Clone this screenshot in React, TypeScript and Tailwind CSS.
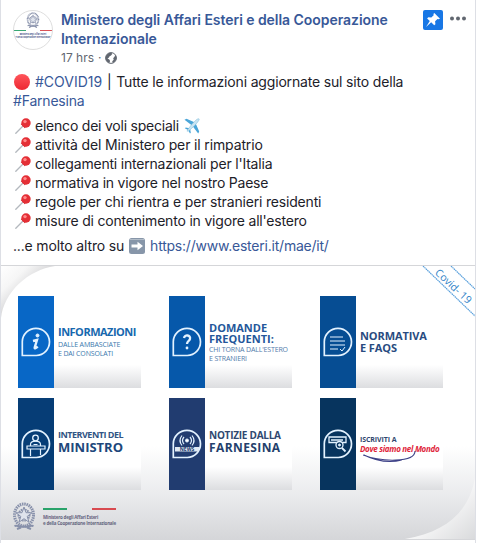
import type { ReactNode } from 'react';

const Pin = () => (
  <svg className="mr-1 h-4 w-4 shrink-0" viewBox="0 0 16 16">
    <path d="M.8 15.200 8 8" stroke="#b3b8be" strokeWidth="1.3" strokeLinecap="round" />
    <path d="M5.700 6c.8-.4 1.600-.7 2-1.200l3.300 3.300c-.5.8-.7 1.500-1.100 2.100z" fill="#c71f27" />
    <circle cx="11" cy="5" r="4.700" fill="#e42f36" />
    <circle cx="10" cy="3.600" r="1.700" fill="#ff8a8a" />
  </svg>
);

const Plane = () => (
  <svg className="ml-[5px] h-4 w-4" viewBox="0 0 16 16">
    <path d="M.5 1.800 2.500.8 11 4.500 8 7.500zM14.200 15.500l1-2-3.700-8.500-3 3z" fill="#4aa5d8" />
    <path d="M.8 10.300l1-.8 3.400.8 1 1 .6 3.400-.8.8-2-3.400z" fill="#4aa5d8" />
    <path d="M3 13.200C4 10.500 10.500 3 13 1.300c1-.7 2.400-.8 2.200.1-.3 2.300-8 9.600-10.600 11.500z" fill="#c9e4f2" stroke="#77b9d8" strokeWidth=".5" />
  </svg>
);

const Arrow = () => (
  <svg className="ml-[5px] mr-[5px] h-4 w-4" viewBox="0 0 16 16">
    <rect width="16" height="16" rx="2.500" fill="#8796a9" />
    <path d="M.5 1.500h15" stroke="#b1bcc8" />
    <path d="M2.500 6.600h6V3.700L14 8l-5.500 4.300V9.400h-6z" fill="#fff" />
  </svg>
);

const Emblem = ({ className }: { className: string }) => (
  <svg className={className} viewBox="0 0 24 28" fill="none" stroke="#8790aa">
    <ellipse cx="12" cy="13" rx="9.500" ry="11" strokeWidth="3" strokeDasharray="1.500 .8" />
    <circle cx="12" cy="13" r="5.500" strokeWidth="2" strokeDasharray="1.500 .7" />
    <path d="m12 5 2 5.700 6 .1-4.800 3.600 1.800 5.800-5-3.500-5 3.500 1.800-5.800L4 10.800l6-.1z" fill="#dfe3ec" strokeWidth="1" />
    <path d="M2.500 24c4-1.500 6 2 9.500.5 3.500 1.500 5.500-2 9.500-.5M5 27l4-1.500m10 1.500-4-1.500" strokeWidth="2" />
  </svg>
);

const Globe = () => (
  <svg className="ml-1 h-3 w-3" viewBox="0 0 12 12">
    <circle cx="6" cy="6" r="5.400" fill="#fff" stroke="#616770" strokeWidth="1" />
    <path d="M.8 5C1.200 2.300 3.500.6 6.500.8L7.200 2 6 3.600 4.600 4.300 4 5.500 2.500 6.500l1.800 1 .8 1.600-.8 1.900C2 10.500.4 8 .8 5zM10.300 2.700l1 2 .2 2L10 9.500 7.800 11l-.6-1.700 1.500-1.500-.5-1.500L9.500 4.800z" fill="#616770" />
  </svg>
);

const Bubble = ({ children }: { children: ReactNode }) => (
  <svg className="h-[30px] w-[30px]" viewBox="0 0 30 30" fill="none" stroke="#e3f2ff">
    <path d="M1.300 28.500V14.500a13.600 13.600 0 1 1 14 14z" strokeWidth="1.700" />
    {children}
  </svg>
);

const Tile = ({ bar, icon, children }: { bar: string; icon: ReactNode; children: ReactNode }) => (
  <div className="flex h-[92px] w-[123px] bg-[linear-gradient(#fff_75%,#dcdde0)]">
    <div className={`flex w-9 shrink-0 items-center justify-center ${bar}`}>{icon}</div>
    <div className="flex w-[87px] shrink-0 flex-col whitespace-nowrap pl-[4px] font-['Open_Sans',sans-serif]">{children}</div>
  </div>
);

const items = [
  { text: 'attività del Ministero per il rimpatrio', tracking: 'tracking-[-0.14px]' },
  { text: "collegamenti internazionali per l'Italia", tracking: 'tracking-[-0.2px]' },
  { text: 'normativa in vigore nel nostro Paese', tracking: 'tracking-[-0.22px]' },
  { text: 'regole per chi rientra e per stranieri residenti', tracking: 'tracking-[-0.18px]' },
  { text: "misure di contenimento in vigore all'estero", tracking: 'tracking-[-0.19px]' },
];

export default function App() {
  return (
    <main className="h-[543px] w-[479px] overflow-hidden bg-white font-['Inter',sans-serif]">
      <article className="h-full w-[476px] border-x border-[#dddfe5] text-[14px] leading-[19px] text-[#1d2129]">
        <header className="flex h-[72px] pl-3 pt-[10px]">
          <div className="flex h-10 w-10 shrink-0 flex-col items-center overflow-hidden rounded-full border border-[#dedede]">
            <Emblem className="mt-px h-4 w-[14px]" />
            <div className="mt-[2px] flex h-px w-full shrink-0 justify-between"><i className="w-3 bg-[#39a874]" /><i className="w-3 bg-[#d95257]" /></div>
            <div className="mt-[2px] whitespace-nowrap text-center text-[2px] font-bold leading-[3px] text-[#404c83]">Ministero degli Affari Esteri<br />e della Cooperazione Internazionale</div>
          </div>
          <div className="ml-2 w-[350px] shrink-0">
            <h1 className="whitespace-nowrap font-semibold tracking-[-0.05px] text-[#385898]">Ministero degli Affari Esteri e della Cooperazione<br />Internazionale</h1>
            <div className="flex items-center text-[12px] leading-[19px] text-[#616770]">17 hrs<span className="ml-1">·</span><Globe /></div>
          </div>
          <div className="ml-3 flex h-5 w-5 items-center justify-center rounded-[2px] bg-[#1877e5]">
            <svg className="h-4 w-4" viewBox="0 0 16 16" fill="#fff"><path d="m9.300 1 5.700 5.700-1.400.6-1.100-.4-2.400 2.400.3 2.900-1.200 1.100-3-3L1 15l3.800-5.900-2.700-2.700 1.200-1.200 3 .3L8.700 3.200l-.3-1.100z" /></svg>
          </div>
          <svg className="ml-[7px] mt-[6px] h-[5px] w-4" viewBox="0 0 16 5" fill="#616770"><circle cx="2" cy="2.400" r="2" /><circle cx="8" cy="2.400" r="2" /><circle cx="14" cy="2.400" r="2" /></svg>
        </header>

        <section className="h-[193px] whitespace-nowrap pl-3 tracking-[-0.22px]">
          <div className="flex items-center"><span className="ml-[1px] mr-[5px] h-4 w-4 rounded-full bg-[linear-gradient(#ff555b,#ed2832)]" /><span className="whitespace-pre tracking-[-0.17px]"><span className="tracking-normal text-[#385898]">#COVID19</span><span className="ml-px mr-px"> | </span>Tutte le informazioni aggiornate sul sito della</span></div>
          <div className="tracking-[-0.2px] text-[#385898]">#Farnesina</div>
          <ul className="mt-[6px]">
            <li className="flex items-center pl-[2px]"><Pin />elenco dei voli speciali<Plane /></li>
            {items.map(({ text, tracking }) => <li key={text} className={`flex items-center pl-[2px] ${tracking}`}><Pin />{text}</li>)}
          </ul>
          <div className="mt-[6px] flex items-center"><span className="tracking-[-0.17px]">...e molto altro su</span><Arrow /><span className="text-[#385898]">https://www.esteri.it/mae/it/</span></div>
        </section>

        <section className="relative h-[275px] overflow-hidden border-y border-[#d5d6d9] bg-[linear-gradient(#fff_66%,#eaebed_84%,#d5d6d9)]">
          <svg className="absolute inset-0 h-full w-full" viewBox="0 0 474 273">
            <defs>
              <linearGradient id="tl" x1="0" y1="0" x2="1" y2="1"><stop stopColor="#fff" /><stop offset=".25" stopColor="#f6f6f6" /><stop offset=".5" stopColor="#d6d6d8" /></linearGradient>
              <linearGradient id="br" x1="0" y1="0" x2="1" y2="1"><stop offset=".4" stopColor="#fff" /><stop offset="1" stopColor="#d9dadc" /></linearGradient>
            </defs>
            <path d="M0 0h54C27 4 3 26 0 52z" fill="url(#tl)" />
            <path d="M474 212c-6 34-29 54-70 61h70z" fill="url(#br)" />
            <path d="m422 0 52 50M450 0l24 23" stroke="#5aa0dc" strokeWidth="1.200" strokeDasharray="1.500 .5" />
          </svg>
          <div className="absolute left-[430px] top-[13px] rotate-[43deg] whitespace-nowrap font-['Open_Sans',sans-serif] text-[10.500px] leading-[14px] text-[#2f83c8]">Covid- 19</div>
          <div className="relative grid grid-cols-[repeat(3,123px)] gap-x-7 gap-y-[10px] pl-[17px] pt-[30px]">
            <Tile bar="bg-[#0867c6]" icon={<Bubble><circle cx="16.500" cy="8.500" r="1.500" fill="#e3f2ff" /><path d="M12 14l4-1-2.300 7.500c-.3 1.500 1.500.7 3-1" strokeWidth="2.400" /></Bubble>}>
              <b className="mt-[29px] text-[11px] leading-[14px] tracking-[-0.5px] text-[#1768ae]">INFORMAZIONI</b>
              <span className="mt-[1px] text-[7px] leading-[9px] tracking-[-0.15px] text-[#3978ad]">DALLE AMBASCIATE<br />E DAI CONSOLATI</span>
            </Tile>
            <Tile bar="bg-[#0658aa]" icon={<Bubble><path d="M12 11c.5-4 7-3 6 1-.5 2-3 2-3 5" strokeWidth="2.300" /><circle cx="15" cy="21" r="1.400" fill="#e3f2ff" stroke="none" /></Bubble>}>
              <b className="mt-[26px] text-[11px] leading-[11px] text-[#24579a]">DOMANDE<br />FREQUENTI:</b>
              <span className="mt-px text-[7px] leading-[9px] tracking-[-0.15px] text-[#537baa]">CHI TORNA DALL'ESTERO<br />E STRANIERI</span>
            </Tile>
            <Tile bar="bg-[#064d93]" icon={<Bubble><path d="M7 10h13M7 14h15M7 18h15M7 22h8m2 0 2 2 3-4" strokeWidth="1" /></Bubble>}>
              <b className="mt-[34px] text-[11px] leading-[12px] tracking-[-0.1px] text-[#294b80]">NORMATIVA<br />E FAQS</b>
            </Tile>
            <Tile bar="bg-[#063d76]" icon={<Bubble><circle cx="14.500" cy="9" r="2.800" strokeWidth="1.300" /><path d="M9.500 17v-1.500c0-4.500 10-4.500 10 0V17M6 17h18v3H6zM9.500 20v7m10-7v6M12.500 15.500h4" strokeWidth="1.200" /></Bubble>}>
              <b className="mt-[31px] text-[9px] leading-[11px] tracking-[-0.5px] text-[#315484]">INTERVENTI DEL</b>
              <b className="text-[13px] leading-[14px] text-[#20477b]">MINISTRO</b>
            </Tile>
            <Tile bar="bg-[#213c70]" icon={<Bubble><circle cx="15" cy="11.500" r="1.500" fill="#fff" /><path d="M12 8q-3 3.500 0 7M18 8q3 3.500 0 7M10 6.500q-4 5 0 10M20 6.500q4 5 0 10" strokeWidth="1.200" /><path d="M3 18h24v4.500H3z" fill="#dfe8f3" stroke="none" /><text x="15" y="22" textAnchor="middle" fill="#213c70" stroke="none" fontSize="5" fontWeight="700" fontFamily="Open Sans">NEWS</text></Bubble>}>
              <b className="mt-[31px] text-[10px] leading-[12px] tracking-[-0.25px] text-[#30486f]">NOTIZIE DALLA</b>
              <b className="text-[12px] leading-[13px] tracking-[0.4px] text-[#243f6c]">FARNESINA</b>
            </Tile>
            <Tile bar="bg-[#07345e]" icon={<Bubble><path d="M6 8h17v5.500H6zM8 11h12" strokeWidth="1.300" /><circle cx="16.500" cy="16" r="3.500" fill="#07345e" strokeWidth="1.300" /><circle cx="16.500" cy="16" r="1" fill="#e3f2ff" /><path d="m19 19 3.500 3.500" strokeWidth="1.800" /></Bubble>}>
              <b className="mt-[38px] text-[7px] leading-[8px] tracking-[-0.1px] text-[#30486f]">ISCRIVITI A</b>
              <b className="text-[8px] italic leading-[10px] tracking-[-0.3px] text-[#e01f3a]">Dove siamo nel Mondo</b>
              <svg className="-mt-[4px] ml-[3px] h-[13px] w-[56px]" viewBox="0 0 56 13" fill="none" stroke="#3d4187"><path d="M0 5c18 7 52 8 52-4M1 5c14 7 26 8 38 5" strokeWidth="1.100" /></svg>
            </Tile>
          </div>
          <footer className="relative mt-[12px] flex pl-[11px]">
            <Emblem className="h-[28px] w-6" />
            <div className="ml-[7px] w-[73px] pt-[6px]">
              <div className="flex h-[2px] justify-between"><i className="w-6 bg-[#29a36a]" /><i className="w-6 bg-[#d84a50]" /></div>
              <div className="mt-[4px] whitespace-nowrap font-['Open_Sans',sans-serif] text-[4.500px] font-bold leading-[6px] tracking-[-0.22px] text-[#65657f]">Ministero degli Affari Esteri<br />e della Cooperazione Internazionale</div>
            </div>
          </footer>
        </section>
      </article>
    </main>
  );
}
